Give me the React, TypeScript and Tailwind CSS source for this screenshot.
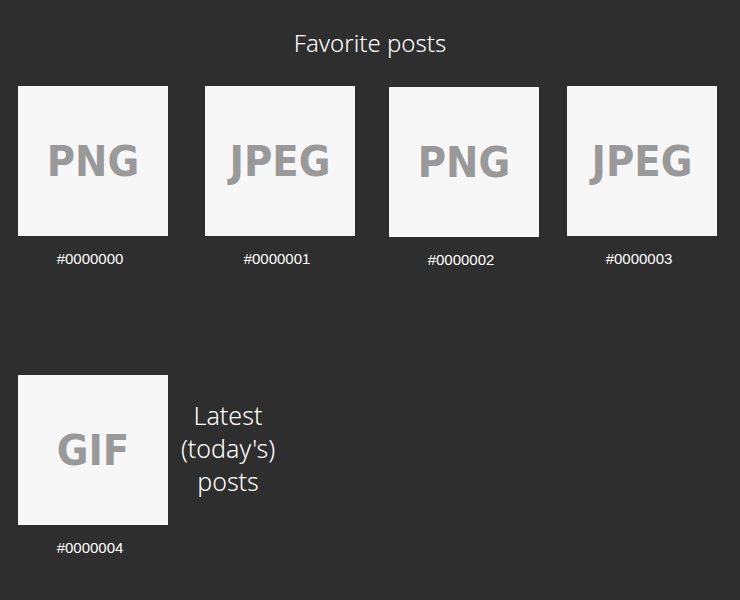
const favorites = [
  { id: "#0000000", kind: "PNG", wrap: "ml-[18px]", box: "mt-0" },
  { id: "#0000001", kind: "JPEG", wrap: "ml-[37px]", box: "mt-0" },
  { id: "#0000002", kind: "PNG", wrap: "ml-[34px]", box: "mt-px" },
  { id: "#0000003", kind: "JPEG", wrap: "ml-[28px]", box: "mt-0" },
];

function Post({ id, kind, box }: { id: string; kind: string; box: string }) {
  return (
    <div className="flex flex-col items-center w-[150px]">
      <div
        className={`w-[150px] h-[150px] bg-[#f7f7f7] flex items-center justify-center text-[#999999] text-[43px] font-bold font-stretch-condensed ${box}`}
        style={{ fontFamily: '"DejaVu Sans", sans-serif' }}
      >
        {kind}
      </div>
      <div
        className="mt-[14px] mr-[6px] text-[15px] text-white leading-[18px]"
        style={{ fontFamily: '"Liberation Sans", Arial, sans-serif' }}
      >
        {id}
      </div>
    </div>
  );
}

export default function App() {
  return (
    <div
      className="w-[740px] h-[600px] bg-[#2e2e2e] text-white overflow-hidden"
      style={{ fontFamily: '"Noto Sans", "Open Sans", sans-serif' }}
    >
      <h1 className="pt-[26px] text-center text-[24px] font-light leading-[34px]">Favorite posts</h1>

      <div className="flex items-start mt-[26px]">
        {favorites.map((f) => (
          <div key={f.id} className={f.wrap}>
            <Post id={f.id} kind={f.kind} box={f.box} />
          </div>
        ))}
      </div>

      <div className="flex items-start ml-[18px] mt-[106px]">
        <Post id="#0000004" kind="GIF" box="mt-0" />
        <div className="h-[150px] pb-[4px] flex items-center ml-[11px]">
          <p className="w-[98px] text-center text-[25px] font-light leading-[33px]">
            Latest (today's) posts
          </p>
        </div>
      </div>
    </div>
  );
}
